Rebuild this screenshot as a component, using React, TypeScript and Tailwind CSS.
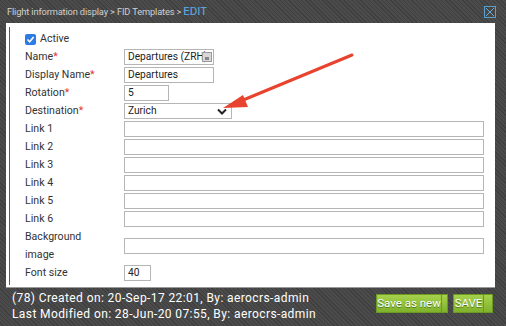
import React from 'react';

const Req = () => <span className="text-[#e53935]">*</span>;

function Row({ label, req, children }: { label: React.ReactNode; req?: boolean; children?: React.ReactNode }) {
  return (
    <div className="flex h-[18px] items-center">
      <div className="w-[99px] shrink-0 leading-[18px] whitespace-nowrap">
        {label}
        {req && <Req />}
      </div>
      {children}
    </div>
  );
}

function Field({ w, value, extra }: { w: string; value?: string; extra?: React.ReactNode }) {
  return (
    <div className={`${w} h-[16px] border border-[#b5b5b5] bg-white flex items-center pl-[3px] text-[10.2px] text-[#222] relative overflow-hidden whitespace-nowrap`}>
      <span>{value}</span>
      {extra}
    </div>
  );
}

export default function App() {
  return (
    <div
      className="w-[506px] h-[326px] relative overflow-hidden bg-[repeating-linear-gradient(45deg,#4b4b4b_0px,#4b4b4b_2px,#3f3f3f_2px,#3f3f3f_3px)]"
      style={{ fontFamily: 'Roboto, "Liberation Sans", sans-serif' }}
    >
      {/* header */}
      <div className="h-[23px] flex items-center pl-[7px] pr-[10px]">
        <span className="text-[9.3px] text-[#d0d0d0] tracking-[-0.15px]">Flight information display &gt; FID Templates &gt;</span>
        <span className="text-[11.5px] text-[#5aaee3] ml-[2px]">EDIT</span>
        <div className="ml-auto w-[12px] h-[12px] border border-[#5b9fd0] flex items-center justify-center">
          <svg width="10" height="10" viewBox="0 0 10 10">
            <path d="M1 1 L9 9 M9 1 L1 9" stroke="#6fa8d0" strokeWidth="1" />
          </svg>
        </div>
      </div>

      {/* panel */}
      <div className="mx-[6px] w-[489px] h-[264px] bg-white shadow-[0_1px_0_#9a9a9a] pt-[4px] pb-[2px]">
        <div className="ml-[3px] h-full border-l border-[#5a5a5a] pl-[15px] pt-[3px] text-[10.6px] text-[#333]">
          <div className="h-[18px] flex items-center">
            <span className="w-[11px] h-[11px] rounded-[2px] bg-[#2d7be5] flex items-center justify-center">
              <svg width="9" height="9" viewBox="0 0 9 9">
                <path d="M1.5 4.5 L3.7 6.7 L7.6 2" stroke="white" strokeWidth="1.6" fill="none" />
              </svg>
            </span>
            <span className="ml-[4px]">Active</span>
          </div>
          <Row label="Name" req>
            <Field
              w="w-[90px]"
              value="Departures (ZRH)"
              extra={
                <span className="absolute right-[1px] top-[2px] w-[10px] h-[10px] bg-[#d8d8d8] border border-[#9a9a9a] flex items-end justify-center">
                  <span className="w-[4px] h-[3px] bg-[#888] mb-[1px]" />
                </span>
              }
            />
          </Row>
          <Row label="Display Name" req>
            <Field w="w-[90px]" value="Departures" />
          </Row>
          <Row label="Rotation" req>
            <Field w="w-[45px]" value="5" />
          </Row>
          <Row label="Destination" req>
            <Field
              w="w-[108px]"
              value="Zurich"
              extra={
                <svg className="absolute right-[4px] top-[4px]" width="10" height="7" viewBox="0 0 10 7">
                  <path d="M1 1.5 L5 5.5 L9 1.5" stroke="#222" strokeWidth="2" fill="none" />
                </svg>
              }
            />
          </Row>
          {['Link 1', 'Link 2', 'Link 3', 'Link 4', 'Link 5', 'Link 6'].map((l) => (
            <Row key={l} label={l}>
              <Field w="w-[360px]" />
            </Row>
          ))}
          <div className="h-[36px] flex items-center">
            <div className="w-[99px] leading-[18px]">
              Background
              <br />
              image
            </div>
            <Field w="w-[360px]" />
          </div>
          <Row label="Font size">
            <Field w="w-[27px]" value="40" />
          </Row>
        </div>
      </div>

      {/* footer */}
      <div className="flex pl-[12px] pr-[13px] pt-[3px]">
        <div className="text-[12px] leading-[16px] text-white tracking-[0.4px] whitespace-nowrap">
          <div>(78) Created on: 20-Sep-17 22:01, By: aerocrs-admin</div>
          <div>Last Modified on: 28-Jun-20 07:55, By: aerocrs-admin</div>
        </div>
        <div className="ml-auto flex gap-[5px] pt-[4px]">
          <button className="h-[19px] w-[72px] flex border border-[#6b9a22] bg-[linear-gradient(#a6d24c,#7fb12a)] text-white text-[11.5px] whitespace-nowrap [text-shadow:0_1px_0_#557a18]">
            <span className="flex-1 flex items-center justify-center border-r border-[#6b9a22]">Save as new</span>
            <span className="w-[5px]" />
          </button>
          <button className="h-[19px] w-[40px] flex border border-[#6b9a22] bg-[linear-gradient(#a6d24c,#7fb12a)] text-white text-[11.5px] whitespace-nowrap [text-shadow:0_1px_0_#557a18]">
            <span className="flex-1 flex items-center justify-center border-r border-[#6b9a22]">SAVE</span>
            <span className="w-[8px]" />
          </button>
        </div>
      </div>

      {/* annotation arrow */}
      <svg className="absolute left-0 top-0 pointer-events-none" width="506" height="326">
        <line x1="352" y1="55" x2="236" y2="103" stroke="#e8432e" strokeWidth="3" strokeLinecap="round" />
        <polygon points="223,108 243,95 248,107" fill="#e8432e" />
      </svg>
    </div>
  );
}
